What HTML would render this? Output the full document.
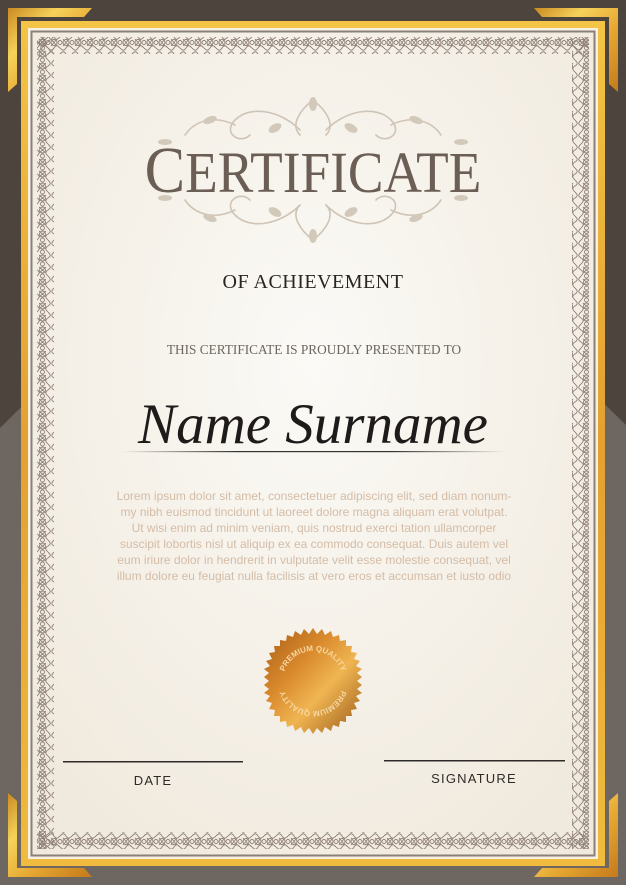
<!DOCTYPE html>
<html><head><meta charset="utf-8">
<style>
html,body{margin:0;padding:0;width:626px;height:885px;overflow:hidden;background:#4d443d}
svg{display:block}
</style></head>
<body>
<svg width="626" height="885" viewBox="0 0 626 885" xmlns="http://www.w3.org/2000/svg">
<defs>
  <linearGradient id="gold" x1="0" y1="0" x2="1" y2="1">
    <stop offset="0" stop-color="#c98a22"/>
    <stop offset="0.3" stop-color="#f6d25a"/>
    <stop offset="0.6" stop-color="#e6a832"/>
    <stop offset="1" stop-color="#c47a1c"/>
  </linearGradient>
  <linearGradient id="goldv" x1="0" y1="0" x2="0" y2="1">
    <stop offset="0" stop-color="#f3c445"/>
    <stop offset="0.5" stop-color="#e4a030"/>
    <stop offset="1" stop-color="#f0bb3e"/>
  </linearGradient>
  <radialGradient id="paper" cx="0.5" cy="0.4" r="0.7">
    <stop offset="0" stop-color="#fbfaf6"/>
    <stop offset="1" stop-color="#f0e9dd"/>
  </radialGradient>
  <linearGradient id="seal" x1="0" y1="0" x2="1" y2="1">
    <stop offset="0" stop-color="#a85e18"/>
    <stop offset="0.35" stop-color="#d9892c"/>
    <stop offset="0.6" stop-color="#f0b552"/>
    <stop offset="1" stop-color="#9a5a1a"/>
  </linearGradient>
  <linearGradient id="nameline" x1="0" y1="0" x2="1" y2="0">
    <stop offset="0" stop-color="#333" stop-opacity="0"/>
    <stop offset="0.3" stop-color="#333"/>
    <stop offset="0.7" stop-color="#333"/>
    <stop offset="1" stop-color="#333" stop-opacity="0"/>
  </linearGradient>
  <pattern id="lace" width="17" height="12" patternUnits="userSpaceOnUse">
    <g fill="none" stroke="#8f8076" stroke-width="0.9">
      <path d="M3 0 C0 3 0 4 3 6 C6 8 6 9 3 12"/>
      <path d="M14 0 C17 3 17 4 14 6 C11 8 11 9 14 12"/>
      <circle cx="8.5" cy="6" r="3"/>
      <circle cx="8.5" cy="0" r="2"/><circle cx="8.5" cy="12" r="2"/>
      <path d="M5 3 L12 9 M12 3 L5 9"/>
    </g>
  </pattern>
  <pattern id="laceh" width="12" height="17" patternUnits="userSpaceOnUse">
    <g fill="none" stroke="#8f8076" stroke-width="0.9">
      <path d="M0 3 C3 0 4 0 6 3 C8 6 9 6 12 3"/>
      <path d="M0 14 C3 17 4 17 6 14 C8 11 9 11 12 14"/>
      <circle cx="6" cy="8.5" r="3"/>
      <circle cx="0" cy="8.5" r="2"/><circle cx="12" cy="8.5" r="2"/>
      <path d="M3 5 L9 12 M9 5 L3 12"/>
    </g>
  </pattern>
</defs>

<rect width="626" height="885" fill="#4d443d"/>
<polygon points="0,428 313,120 626,425 626,885 0,885" fill="#6e6661"/>

<polygon points="8,8 92,8 84,17 17,17 17,84 8,92" fill="url(#gold)"/>
<polygon points="618,8 534,8 542,17 609,17 609,84 618,92" fill="url(#gold)"/>
<polygon points="8,877 92,877 84,868 17,868 17,801 8,793" fill="url(#gold)"/>
<polygon points="618,877 534,877 542,868 609,868 609,801 618,793" fill="url(#gold)"/>

<rect x="21" y="21" width="584" height="845" fill="url(#goldv)"/>
<rect x="28" y="28" width="570" height="831" fill="#f7f1e3"/>
<rect x="30.5" y="30.5" width="565" height="826" fill="#8a8078"/>
<rect x="32.5" y="32.5" width="561" height="822" fill="url(#paper)"/>

<rect x="37" y="37" width="552" height="17" fill="url(#laceh)"/>
<rect x="37" y="832" width="552" height="17" fill="url(#laceh)"/>
<rect x="37" y="37" width="17" height="812" fill="url(#lace)"/>
<rect x="572" y="37" width="17" height="812" fill="url(#lace)"/>

<g fill="none" stroke="#cfc4b6" stroke-width="1.6" stroke-linecap="round">
  <path d="M313 100 C300 110 290 125 300 135"/>
  <path d="M313 100 C326 110 336 125 326 135"/>
  <path d="M300 130 C280 110 250 105 235 120 C222 133 240 145 250 135"/>
  <path d="M326 130 C346 110 376 105 391 120 C404 133 386 145 376 135"/>
  <path d="M235 125 C215 115 195 120 185 135"/>
  <path d="M391 125 C411 115 431 120 441 135"/>
  <path d="M300 205 C280 225 250 230 235 215 C222 202 240 190 250 200"/>
  <path d="M326 205 C346 225 376 230 391 215 C404 202 386 190 376 200"/>
  <path d="M235 210 C215 220 195 215 185 200"/>
  <path d="M391 210 C411 220 431 215 441 200"/>
  <path d="M313 240 C300 230 290 215 300 205"/>
  <path d="M313 240 C326 230 336 215 326 205"/>
</g>
<g fill="#d3c9bb">
  <ellipse cx="275" cy="128" rx="7" ry="4" transform="rotate(-30 275 128)"/>
  <ellipse cx="351" cy="128" rx="7" ry="4" transform="rotate(30 351 128)"/>
  <ellipse cx="210" cy="120" rx="7" ry="3.5" transform="rotate(-20 210 120)"/>
  <ellipse cx="416" cy="120" rx="7" ry="3.5" transform="rotate(20 416 120)"/>
  <ellipse cx="165" cy="142" rx="7" ry="3" />
  <ellipse cx="461" cy="142" rx="7" ry="3" />
  <ellipse cx="275" cy="212" rx="7" ry="4" transform="rotate(30 275 212)"/>
  <ellipse cx="351" cy="212" rx="7" ry="4" transform="rotate(-30 351 212)"/>
  <ellipse cx="210" cy="218" rx="7" ry="3.5" transform="rotate(20 210 218)"/>
  <ellipse cx="416" cy="218" rx="7" ry="3.5" transform="rotate(-20 416 218)"/>
  <ellipse cx="165" cy="198" rx="7" ry="3"/>
  <ellipse cx="461" cy="198" rx="7" ry="3"/>
  <ellipse cx="313" cy="104" rx="4" ry="7"/>
  <ellipse cx="313" cy="236" rx="4" ry="7"/>
</g>

<text x="313" y="192" text-anchor="middle" font-family="Liberation Serif, serif" font-size="58" fill="#6a5e55" transform="translate(313 0) scale(0.92 1) translate(-313 0)"><tspan font-size="66">C</tspan>ERTIFICATE</text>

<text x="313" y="288" text-anchor="middle" font-family="Liberation Serif, serif" font-size="20" fill="#2a2522" letter-spacing="0.5">OF ACHIEVEMENT</text>

<text x="314" y="354" text-anchor="middle" font-family="Liberation Serif, serif" font-size="13.3" fill="#6d6560">THIS CERTIFICATE IS PROUDLY PRESENTED TO</text>

<text x="313" y="443" text-anchor="middle" font-family="Liberation Serif, serif" font-style="italic" font-size="57" fill="#1e1b1a">Name Surname</text>
<rect x="122" y="451" width="384" height="1.2" fill="url(#nameline)"/>

<g font-family="Liberation Sans, sans-serif" font-size="12" fill="#d4bca6" text-anchor="middle">
  <text x="314" y="500">Lorem ipsum dolor sit amet, consectetuer adipiscing elit, sed diam nonum-</text>
  <text x="314" y="516">my nibh euismod tincidunt ut laoreet dolore magna aliquam erat volutpat.</text>
  <text x="314" y="532">Ut wisi enim ad minim veniam, quis nostrud exerci tation ullamcorper</text>
  <text x="314" y="548">suscipit lobortis nisl ut aliquip ex ea commodo consequat. Duis autem vel</text>
  <text x="314" y="564">eum iriure dolor in hendrerit in vulputate velit esse molestie consequat, vel</text>
  <text x="314" y="580">illum dolore eu feugiat nulla facilisis at vero eros et accumsan et iusto odio</text>
</g>

<g transform="translate(313 681)">
  <polygon fill="url(#seal)" points="
  0,-53 4,-47 9,-52 12,-46 18,-50 20,-44 26,-46 27,-40 33,-41 33,-35 39,-35 38,-29 44,-28 41,-22 47,-20 43,-15 49,-12 44,-8 49,-4 44,0 49,4 44,8 49,12 43,15 47,20 41,22 44,28 38,29 39,35 33,35 33,41 27,40 26,46 20,44 18,50 12,46 9,52 4,47 0,53 -4,47 -9,52 -12,46 -18,50 -20,44 -26,46 -27,40 -33,41 -33,35 -39,35 -38,29 -44,28 -41,22 -47,20 -43,15 -49,12 -44,8 -49,4 -44,0 -49,-4 -44,-8 -49,-12 -43,-15 -47,-20 -41,-22 -44,-28 -38,-29 -39,-35 -33,-35 -33,-41 -27,-40 -26,-46 -20,-44 -18,-50 -12,-46 -9,-52 -4,-47"/>
  <path id="arcTop" d="M-30 0 A30 30 0 0 1 30 0" fill="none"/>
  <path id="arcBot" d="M30 0 A30 30 0 0 1 -30 0" fill="none"/>
  <text font-family="Liberation Sans, sans-serif" font-size="8" font-weight="bold" fill="#f6d7a0" text-anchor="middle"><textPath href="#arcTop" startOffset="50%">PREMIUM QUALITY</textPath></text>
  <text font-family="Liberation Sans, sans-serif" font-size="8" font-weight="bold" fill="#f6d7a0" text-anchor="middle"><textPath href="#arcBot" startOffset="50%">PREMIUM QUALITY</textPath></text>
</g>

<rect x="63" y="761" width="180" height="1.5" fill="#2e2a28"/>
<rect x="384" y="760" width="181" height="1.5" fill="#2e2a28"/>
<text x="153" y="785" text-anchor="middle" font-family="Liberation Sans, sans-serif" font-size="13" fill="#2e2a28" letter-spacing="1.2">DATE</text>
<text x="474" y="783" text-anchor="middle" font-family="Liberation Sans, sans-serif" font-size="13" fill="#2e2a28" letter-spacing="1.2">SIGNATURE</text>
</svg>
</body></html>
